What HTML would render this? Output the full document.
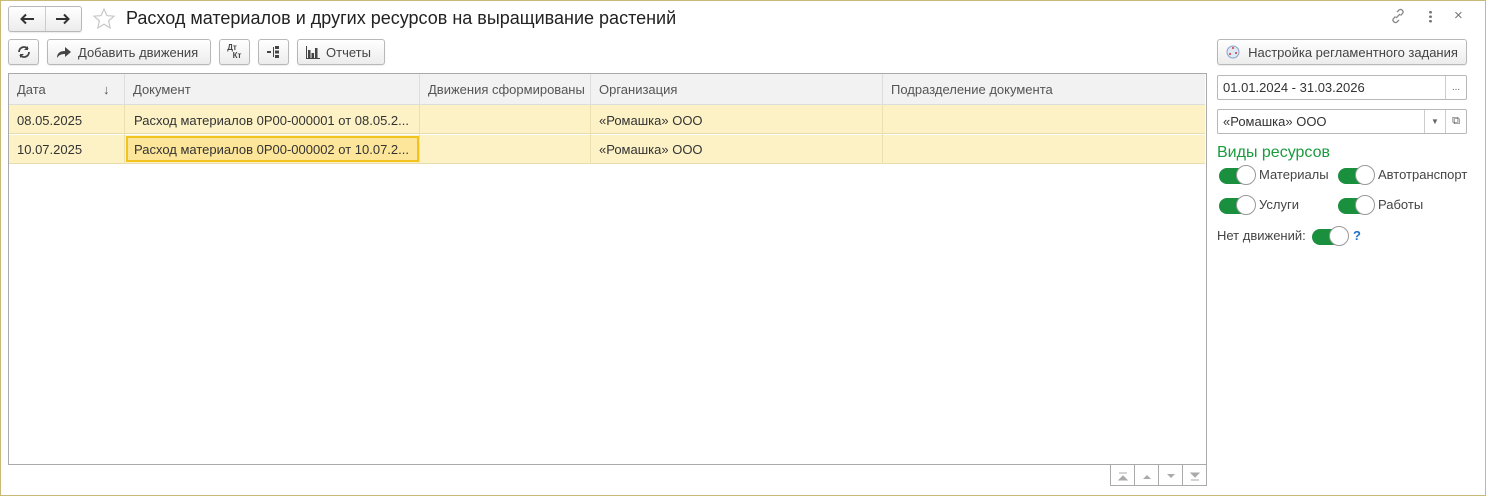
<!DOCTYPE html><html><head><meta charset="utf-8"><style>
*{box-sizing:border-box;margin:0;padding:0}
body{width:1486px;height:496px;background:#fff;font-family:"Liberation Sans",Arial,sans-serif;font-size:13px;color:#333;position:relative;overflow:hidden}
.win{position:absolute;left:0;top:0;width:1486px;height:496px;border:1px solid #c9b878}
.a{position:absolute}
.btn{position:absolute;border:1px solid #b8b8b8;border-radius:3px;background:linear-gradient(#fff,#ececec);height:26px;display:flex;align-items:center;justify-content:center;color:#444;font-size:13px;box-shadow:0 1px 1px rgba(0,0,0,.08)}
.hdr{position:absolute;top:74px;height:31px;background:#f2f2f2;border-bottom:1px solid #ddd;color:#555;line-height:31px;padding-left:8px}
.row{position:absolute;left:9px;width:1196px;height:29px;background:#fdf2c6;border-bottom:1px solid #e8dcae}
.cell{position:absolute;line-height:29px;color:#333}
.vl{position:absolute;width:1px;background:#ddd}
.tg{position:absolute;width:36px;height:16px;border-radius:8px;background:#1a8f3e}
.tg::after{content:"";position:absolute;right:-1px;top:-2px;width:18px;height:18px;border-radius:50%;background:#fff;border:1px solid #999;box-sizing:content-box;margin-top:-1px}
.lbl{position:absolute;color:#444;font-size:13px;line-height:16px}
.fld{position:absolute;border:1px solid #b8b8b8;border-radius:2px;background:#fff;height:25px;line-height:23px;padding-left:5px;color:#333;font-size:13px}
.nb{position:absolute;top:464px;width:25px;height:22px;border:1px solid #aaa;border-top:none;background:#fff}
</style></head><body><div class="win"></div>
<div class="btn" style="left:8px;top:6px;width:74px;height:26px">
<svg class="a" style="left:10px;top:6px" width="16" height="12" viewBox="0 0 16 12"><path d="M15 6H3M7 1.5L2.5 6 7 10.5" fill="none" stroke="#333" stroke-width="2"/></svg>
<span style="position:absolute;left:36px;top:0;width:1px;height:24px;background:#ccc"></span>
<svg class="a" style="left:46px;top:6px" width="16" height="12" viewBox="0 0 16 12"><path d="M1 6h12M9 1.5L13.5 6 9 10.5" fill="none" stroke="#333" stroke-width="2"/></svg></div>
<svg class="a" style="left:92px;top:7px" width="24" height="24" viewBox="0 0 24 24"><path d="M12 2l2.9 6.6 7.1.6-5.4 4.7 1.6 7-6.2-3.7-6.2 3.7 1.6-7L2 9.2l7.1-.6z" fill="none" stroke="#c8c8c8" stroke-width="1.2"/></svg>
<div class="a" style="left:126px;top:6px;font-size:18px;color:#222;line-height:24px">Расход материалов и других ресурсов на выращивание растений</div>
<svg class="a" style="left:1390px;top:8px" width="16" height="16" viewBox="0 0 16 16"><g fill="none" stroke="#888" stroke-width="1.3"><path d="M7 4l2-2a2.5 2.5 0 013.5 3.5l-2 2"/><path d="M9 12l-2 2a2.5 2.5 0 01-3.5-3.5l2-2"/><path d="M6 10l4-4"/></g></svg>
<div class="a" style="left:1429px;top:10px;width:3px;height:13px;background:radial-gradient(circle,#777 1.3px,transparent 1.5px) 0 0/3px 4.5px"></div>
<div class="a" style="left:1454px;top:7px;color:#777;font-size:15px">×</div>
<div class="btn" style="left:8px;top:39px;width:31px"><svg width="14" height="14" viewBox="0 0 14 14"><g fill="none" stroke="#444" stroke-width="1.8"><path d="M2 7a5 5 0 019-3"/><path d="M12 7a5 5 0 01-9 3"/></g><path d="M11 1v4H7z M3 13V9h4z" fill="#444"/></svg></div>
<div class="btn" style="left:47px;top:39px;width:164px;justify-content:flex-start;padding-left:8px"><svg width="16" height="14" viewBox="0 0 16 14"><path d="M1 13c0-5 3-7 8-7V2l6 5-6 5V9c-4 0-6 1-8 4z" fill="#444"/></svg><span style="margin-left:6px">Добавить движения</span></div>
<div class="btn" style="left:219px;top:39px;width:31px;font-size:8px;font-weight:bold;line-height:8px;flex-direction:column"><span style="margin-left:-5px">Дт</span><span style="margin-left:5px">Кт</span></div>
<div class="btn" style="left:258px;top:39px;width:31px"><svg width="16" height="14" viewBox="0 0 16 14"><g fill="#444"><rect x="1" y="6" width="4" height="2"/><rect x="9" y="1" width="4" height="3"/><rect x="9" y="5.5" width="4" height="3"/><rect x="9" y="10" width="4" height="3"/><rect x="7" y="2" width="1" height="10"/></g></svg></div>
<div class="btn" style="left:297px;top:39px;width:88px;justify-content:flex-start;padding-left:8px"><svg width="14" height="13" viewBox="0 0 14 13"><g fill="#444"><rect x="0" y="0" width="1" height="13"/><rect x="0" y="12" width="14" height="1"/><rect x="2" y="4" width="2.5" height="8"/><rect x="5.5" y="7" width="2.5" height="5"/><rect x="9" y="2" width="2.5" height="10"/></g></svg><span style="margin-left:6px">Отчеты</span></div>
<div class="btn" style="left:1217px;top:39px;width:250px"><svg width="14" height="14" viewBox="0 0 14 14"><circle cx="7" cy="7" r="6" fill="#dfe8f5" stroke="#8aa3c8"/><circle cx="7" cy="3" r="1" fill="#d33"/><circle cx="10" cy="8" r="1" fill="#d33"/><circle cx="4" cy="9" r="1" fill="#d33"/></svg><span style="margin-left:8px">Настройка регламентного задания</span></div>
<div class="a" style="left:8px;top:73px;width:1199px;height:392px;border:1px solid #aaa"></div>
<div class="hdr" style="left:9px;width:115px">Дата<span style="position:absolute;left:94px">↓</span></div>
<div class="hdr" style="left:125px;width:294px">Документ</div>
<div class="hdr" style="left:420px;width:170px">Движения сформированы</div>
<div class="hdr" style="left:591px;width:291px">Организация</div>
<div class="hdr" style="left:883px;width:322px">Подразделение документа</div>
<div class="vl" style="left:124px;top:74px;height:90px"></div><div class="vl" style="left:419px;top:74px;height:90px"></div><div class="vl" style="left:590px;top:74px;height:90px"></div><div class="vl" style="left:882px;top:74px;height:90px"></div>
<div class="row" style="top:105px"></div><div class="row" style="top:135px"></div>
<div class="vl" style="left:124px;top:105px;height:59px;background:#ecdfb0"></div><div class="vl" style="left:419px;top:105px;height:59px;background:#ecdfb0"></div><div class="vl" style="left:590px;top:105px;height:59px;background:#ecdfb0"></div><div class="vl" style="left:882px;top:105px;height:59px;background:#ecdfb0"></div>
<div class="cell" style="left:17px;top:106px">08.05.2025</div>
<div class="cell" style="left:134px;top:106px">Расход материалов 0Р00-000001 от 08.05.2...</div>
<div class="cell" style="left:599px;top:106px">«Ромашка» ООО</div>
<div class="cell" style="left:17px;top:135px">10.07.2025</div>
<div class="a" style="left:126px;top:136px;width:293px;height:26px;border:2px solid #f2c21f;background:#fde69a"></div>
<div class="cell" style="left:134px;top:135px">Расход материалов 0Р00-000002 от 10.07.2...</div>
<div class="cell" style="left:599px;top:135px">«Ромашка» ООО</div>
<div class="nb" style="left:1110px;border-top:1px solid #aaa;border-right:none"><svg width="24" height="22"><path d="M8 8h8M8 15l4-4 4 4z" stroke="#aaa" fill="#aaa"/></svg></div>
<div class="nb" style="left:1134px;border-top:1px solid #aaa;border-right:none"><svg width="24" height="22"><path d="M8 14l4-4 4 4z" fill="#aaa"/></svg></div>
<div class="nb" style="left:1158px;border-top:1px solid #aaa;border-right:none"><svg width="24" height="22"><path d="M8 9l4 4 4-4z" fill="#aaa"/></svg></div>
<div class="nb" style="left:1182px;border-top:1px solid #aaa"><svg width="24" height="22"><path d="M8 8l4 4 4-4zM8 15h8" stroke="#aaa" fill="#aaa"/></svg></div>
<div class="fld" style="left:1217px;top:75px;width:250px">01.01.2024 - 31.03.2026<span style="position:absolute;right:0;top:0;width:21px;height:23px;border-left:1px solid #ccc;text-align:center;color:#666;font-size:10px">...</span></div>
<div class="fld" style="left:1217px;top:109px;width:250px">«Ромашка» ООО<span style="position:absolute;right:21px;top:0;width:21px;height:23px;border-left:1px solid #ccc;text-align:center;color:#666;font-size:8px">▼</span><span style="position:absolute;right:0;top:0;width:21px;height:23px;border-left:1px solid #ccc;text-align:center;color:#555;font-size:11px">⧉</span></div>
<div class="a" style="left:1217px;top:144px;font-size:16px;color:#1a9c3e">Виды ресурсов</div>
<div class="tg" style="left:1219px;top:168px"></div><div class="lbl" style="left:1259px;top:167px">Материалы</div>
<div class="tg" style="left:1338px;top:168px"></div><div class="lbl" style="left:1378px;top:167px">Автотранспорт</div>
<div class="tg" style="left:1219px;top:198px"></div><div class="lbl" style="left:1259px;top:197px">Услуги</div>
<div class="tg" style="left:1338px;top:198px"></div><div class="lbl" style="left:1378px;top:197px">Работы</div>
<div class="lbl" style="left:1217px;top:228px">Нет движений:</div>
<div class="tg" style="left:1312px;top:229px"></div>
<div class="lbl" style="left:1353px;top:228px;color:#1a74c8;font-weight:bold">?</div>
</body></html>
